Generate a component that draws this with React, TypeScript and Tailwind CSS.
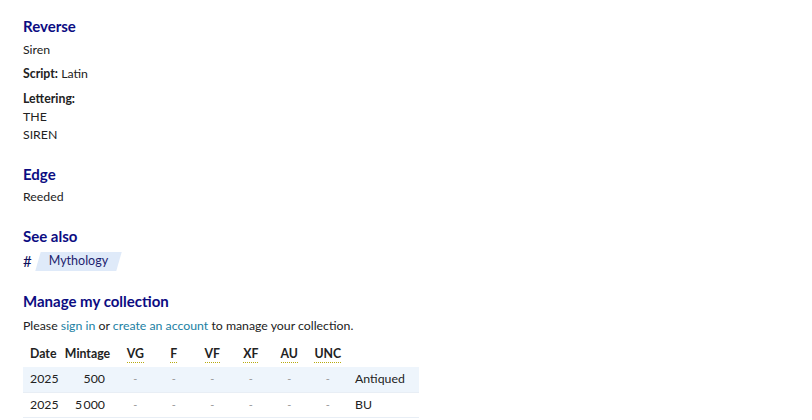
const grades = [
  { abbr: 'VG', title: 'Very good' },
  { abbr: 'F', title: 'Fine' },
  { abbr: 'VF', title: 'Very fine' },
  { abbr: 'XF', title: 'Extremely fine' },
  { abbr: 'AU', title: 'About uncirculated' },
  { abbr: 'UNC', title: 'Uncirculated' },
]

const rows = [
  { date: '2025', mintage: '500', comment: 'Antiqued' },
  { date: '2025', mintage: '5\u2009000', comment: 'BU' },
]

const Heading = ({ children, className = '' }: { children: React.ReactNode; className?: string }) => (
  <h2 className={`text-[15px] leading-[20px] font-bold text-[#0c0c82] ${className}`}>{children}</h2>
)

export default function App() {
  return (
    <div className="min-h-screen bg-white px-[23px] pt-[16px] text-[12.3px] leading-[18px] text-[#222]" style={{ fontFamily: 'Lato, "Noto Sans", sans-serif' }}>
      <section>
        <Heading>Reverse</Heading>
        <p className="mt-[5px]">Siren</p>
        <p className="mt-[6px]"><strong>Script:</strong> Latin</p>
        <p className="mt-[7px]"><strong>Lettering:</strong></p>
        <p>THE<br />SIREN</p>
      </section>

      <section className="mt-[20px]">
        <Heading>Edge</Heading>
        <p className="mt-[4px]">Reeded</p>
      </section>

      <section className="mt-[20px]">
        <Heading>See also</Heading>
        <div className="mt-[5px] flex h-[20px] items-center gap-[6px]">
          <span className="text-[15px] text-[#0e0e5c]">#</span>
          <a href="#" className="relative inline-flex h-[19px] items-center px-[11px] text-[12.5px] text-[#22226e]">
            <span className="absolute inset-0 -skew-x-[16deg] bg-[#dfeaf9]" />
            <span className="relative">Mythology</span>
          </a>
        </div>
      </section>

      <section className="mt-[20px]">
        <Heading>Manage my collection</Heading>
        <p className="mt-[6px]">
          Please <a href="#" className="text-[#1b7fa3]">sign in</a> or{' '}
          <a href="#" className="text-[#1b7fa3]">create an account</a> to manage your collection.
        </p>

        <table className="mt-[6px] table-fixed border-collapse">
          <thead>
            <tr className="h-[26px]">
              <th className="w-[36px] pl-[7px] text-left font-bold">Date</th>
              <th className="w-[57px] text-center font-bold">Mintage</th>
              {grades.map((g) => (
                <th key={g.abbr} className="w-[38.5px] text-center font-bold">
                  <abbr title={g.title} className="no-underline border-b border-dotted border-[#b8aa10] pb-[1px]">{g.abbr}</abbr>
                </th>
              ))}
              <th className="w-[72px]" />
            </tr>
          </thead>
          <tbody>
            {rows.map((r, i) => (
              <tr key={i} className={`h-[25px] border-b border-[#e8eef5] ${i === 0 ? 'bg-[#eef5fc]' : ''}`}>
                <td className="pl-[7px] text-left">{r.date}</td>
                <td className="pr-[11px] text-right">{r.mintage}</td>
                {grades.map((g) => (
                  <td key={g.abbr} className="text-center text-[11px] text-[#9a9a9a]">-</td>
                ))}
                <td className="pl-[8px] text-left">{r.comment}</td>
              </tr>
            ))}
          </tbody>
        </table>
      </section>
    </div>
  )
}
